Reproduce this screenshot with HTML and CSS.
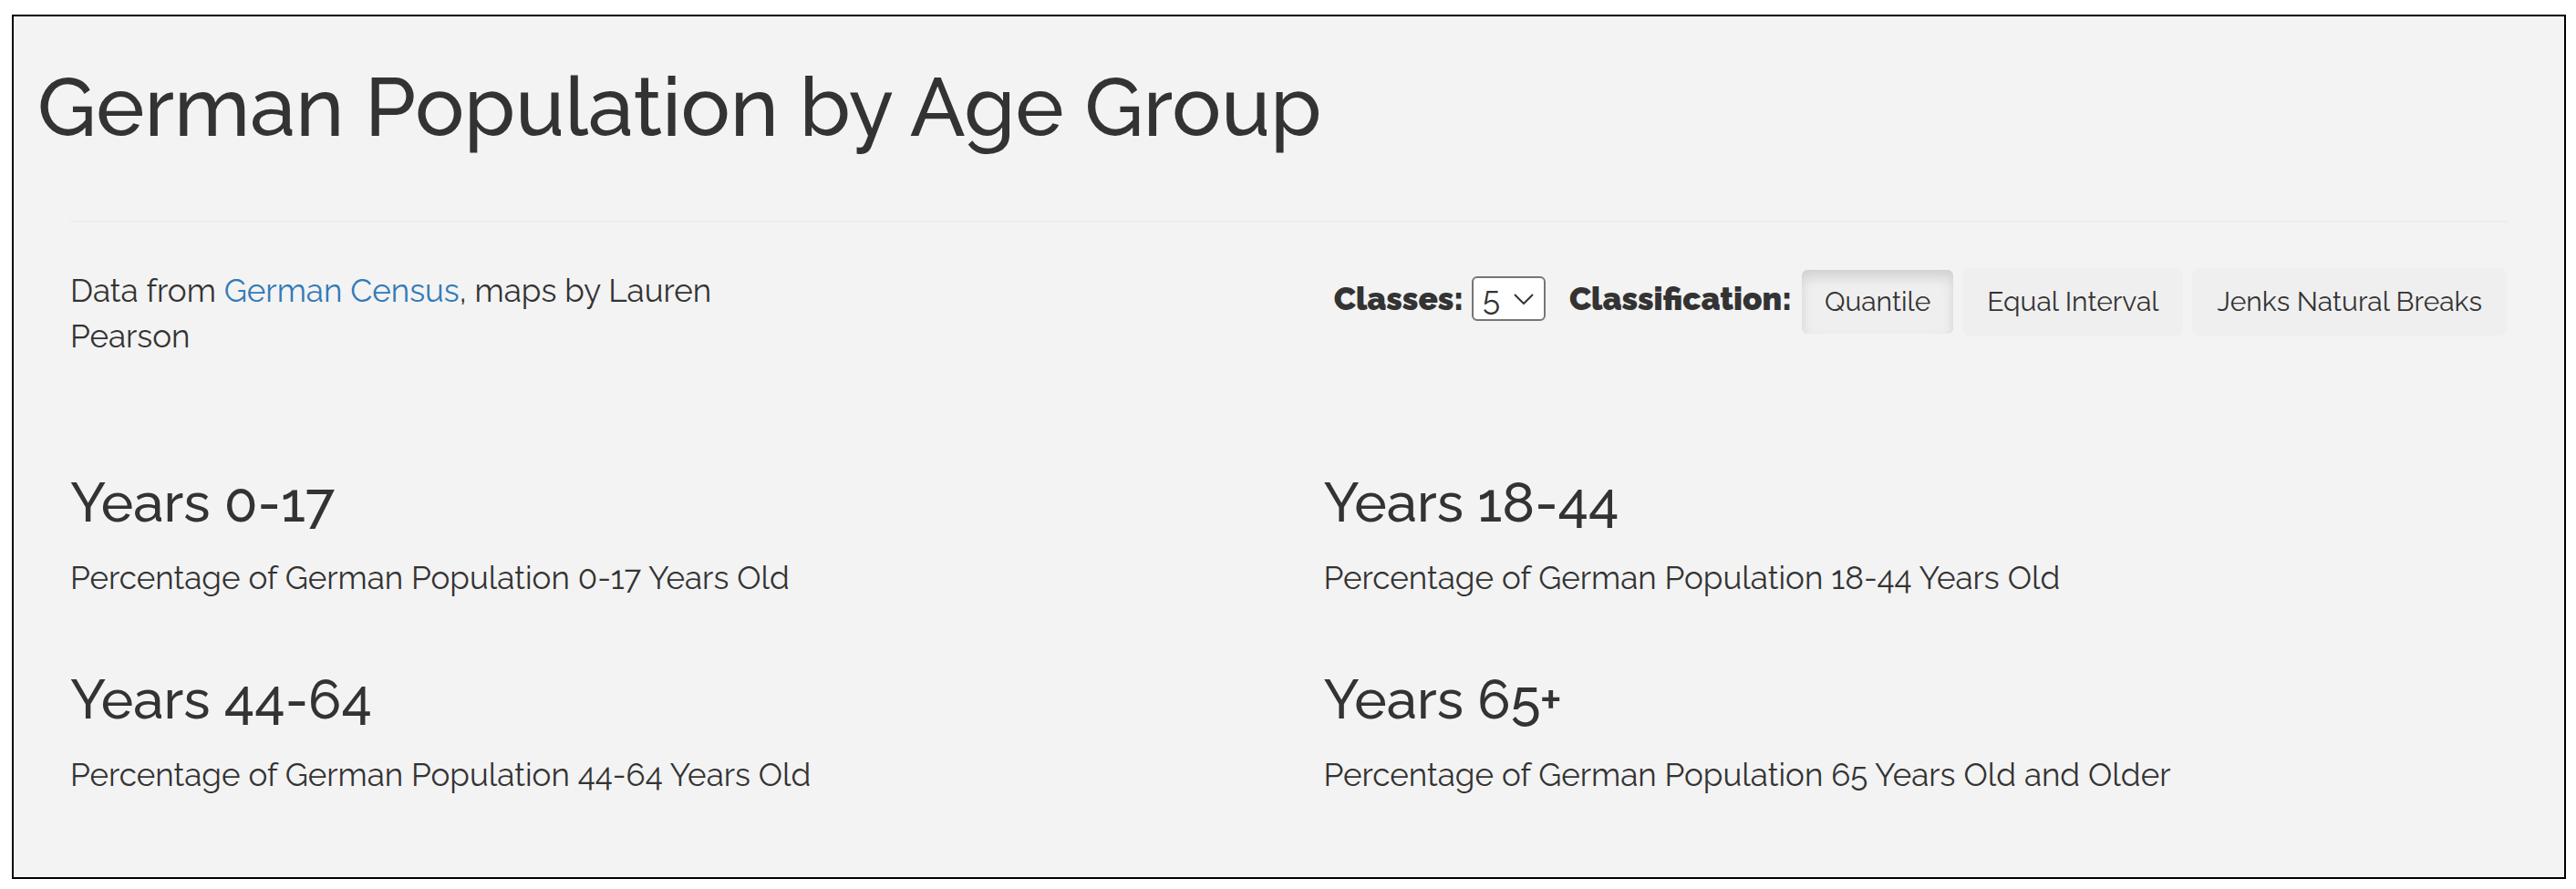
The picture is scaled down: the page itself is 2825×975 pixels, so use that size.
FILE: index.html
```html
<!DOCTYPE html>
<html lang="en">
<head>
<meta charset="utf-8">
<title>German Population by Age Group</title>
<link rel="stylesheet" href="styles.css">
</head>
<body>
<main class="frame">
  <h1 class="title">German Population by Age Group</h1>
  <hr class="rule">
  <div class="toolbar">
    <p class="credit">Data from <a class="link" href="#census">German Census</a>, maps by Lauren Pearson</p>
    <div class="controls">
      <label class="label" for="classes">Classes:</label>
      <span class="picker">
        <select class="select" id="classes">
          <option>3</option>
          <option>4</option>
          <option selected>5</option>
          <option>6</option>
          <option>7</option>
        </select>
        <svg class="chevron" viewBox="0 0 22 12" aria-hidden="true"><path d="M1 1 L11 11 L21 1"/></svg>
      </span>
      <span class="label label-group" id="classification">Classification:</span>
      <div class="buttons" role="group" aria-labelledby="classification">
        <button class="button active" type="button" aria-pressed="true">Quantile</button>
        <button class="button" type="button" aria-pressed="false">Equal Interval</button>
        <button class="button" type="button" aria-pressed="false">Jenks Natural Breaks</button>
      </div>
    </div>
  </div>
  <div class="groups">
    <section class="group">
      <h2 class="heading">Years 0-17</h2>
      <p class="text">Percentage of German Population 0-17 Years Old</p>
    </section>
    <section class="group">
      <h2 class="heading">Years 18-44</h2>
      <p class="text">Percentage of German Population 18-44 Years Old</p>
    </section>
    <section class="group">
      <h2 class="heading">Years 44-64</h2>
      <p class="text">Percentage of German Population 44-64 Years Old</p>
    </section>
    <section class="group">
      <h2 class="heading">Years 65+</h2>
      <p class="text">Percentage of German Population 65 Years Old and Older</p>
    </section>
  </div>
</main>
</body>
</html>
```

FILE: styles.css
```css
* {
  box-sizing: border-box;
}

body {
  margin: 16px 11px 11px 13px;
  background: #fff;
  color: #333;
  font-family: Raleway, Lato, "Open Sans", sans-serif;
  font-size: 35px;
  font-weight: 400;
  line-height: 50px;
}

.frame {
  padding: 49px 62px 62px;
  border: 2px solid #000;
  background: #f3f3f3;
}

.title {
  margin: 0 0 0 -36px;
  font-size: 90px;
  font-weight: 500;
  line-height: 100px;
}

.rule {
  margin: 75px 0 50px;
  border: 0;
  border-top: 2px solid #eee;
}

.toolbar {
  display: flex;
  justify-content: space-between;
  align-items: flex-start;
}

.credit {
  width: 29%;
  margin: 0;
}

.link {
  color: #337ab7;
  text-decoration: none;
}

.controls {
  display: flex;
  align-items: flex-start;
}

.label {
  padding-top: 9px;
  font-weight: 900;
  line-height: 50px;
}

.label-group {
  margin: 0 11px 0 26px;
}

.picker {
  display: grid;
  align-items: center;
  margin: 9px 0 0 9px;
}

.select {
  grid-area: 1 / 1;
  width: 81px;
  height: 49px;
  padding: 0 10px;
  border: 2px solid #767676;
  border-radius: 6px;
  background: #fff;
  color: #333;
  font: inherit;
  line-height: 44px;
  appearance: none;
}

.chevron {
  grid-area: 1 / 1;
  justify-self: end;
  width: 22px;
  height: 12px;
  margin-right: 13px;
  fill: none;
  stroke: #333;
  stroke-width: 2;
  pointer-events: none;
}

.buttons {
  display: flex;
  align-items: center;
  gap: 10px;
  margin-right: 1px;
}

.button {
  height: 74px;
  padding: 0 27px;
  border: 0;
  border-radius: 8px;
  background: #efefef;
  color: #333;
  font: inherit;
  font-size: 30px;
}

.button.active {
  height: 70px;
  padding: 0 25px;
  border-radius: 6px;
  box-shadow: inset 0 8px 13px rgba(0, 0, 0, 0.125);
}

.groups {
  display: grid;
  grid-template-columns: 1fr 1fr;
  column-gap: 76px;
  row-gap: 50px;
  margin-top: 124px;
}

.heading {
  margin: 0 0 25px;
  font-size: 60px;
  font-weight: 500;
  line-height: 66px;
}

.text {
  margin: 0 0 25px;
}
```
